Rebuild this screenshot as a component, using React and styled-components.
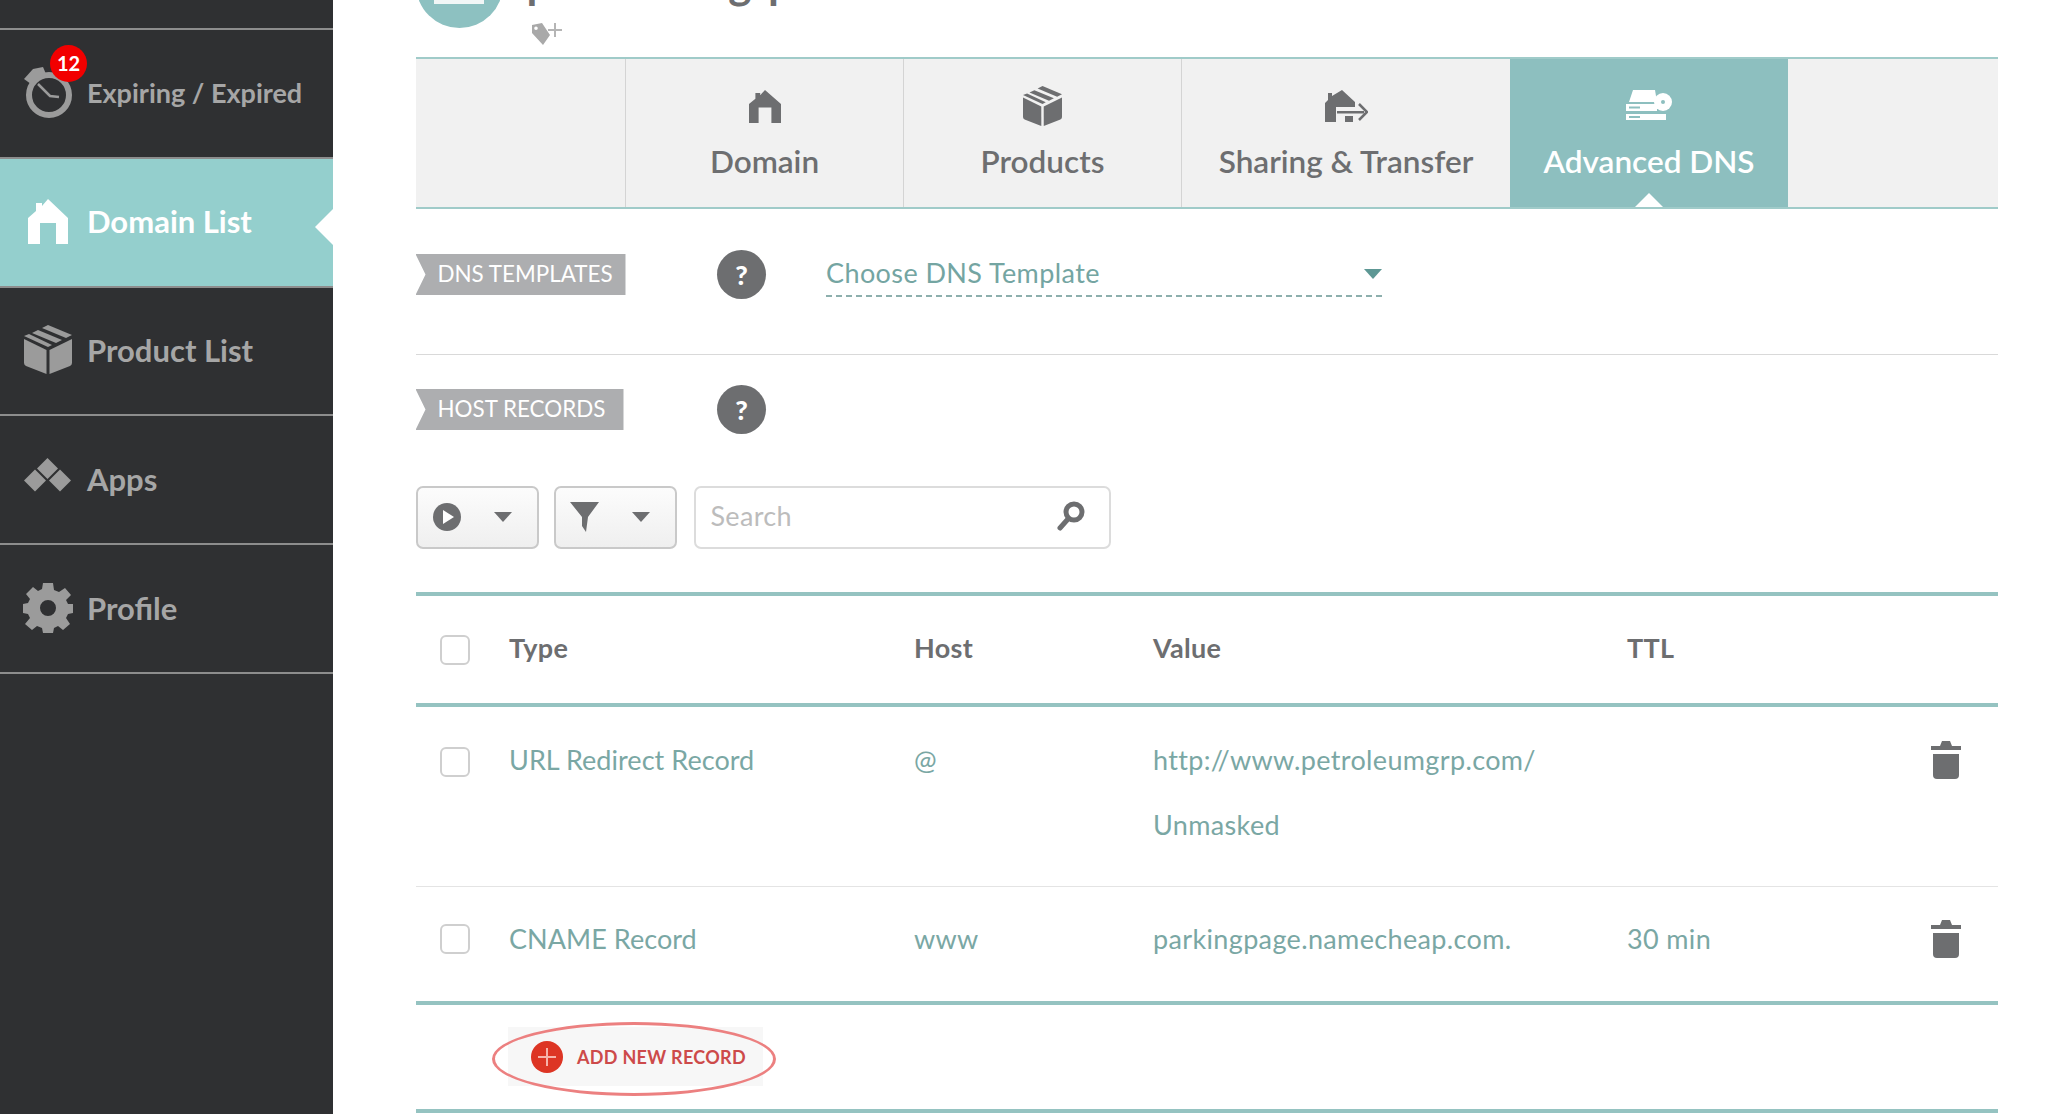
import React from "react";
import styled, { createGlobalStyle } from "styled-components";

const GlobalStyle = createGlobalStyle`
  html, body {
    margin: 0;
    height: 100%;
    overflow: hidden;
    background: #fff;
  }
  * {
    box-sizing: border-box;
  }
  body {
    font-family: Lato, "Open Sans", sans-serif;
  }
`;

const HouseIcon = ({ width = 40, height = 45 }) => (
  <svg width={width} height={height} viewBox="0 0 40 45" fill="currentColor" preserveAspectRatio="none">
    <path d="M0 19 L8 12 V4 H14 V7 L20 0 L40 19 V45 H28 V24 H12 V45 H0 Z" />
  </svg>
);

const BoxIcon = ({ width = 48, height = 49 }) => (
  <svg width={width} height={height} viewBox="0 0 48 49" fill="currentColor">
    <path d="M0 14 L22.5 25 V49 L2 41 Q0 40 0 38 Z" />
    <path d="M48 14 L25.5 25 V49 L46 41 Q48 40 48 38 Z" />
    <path d="M24 0 L48 10 L42 13 L18 3 Z" />
    <path d="M14 5 L38 15 L32 18 L8 8 Z" />
    <path d="M5 9 L28 20 L24 22 L0 11 Z" />
  </svg>
);

const StopwatchIcon = () => (
  <svg width="48" height="51" viewBox="0 0 48 51" fill="none">
    <circle cx="25" cy="28" r="20" stroke="#9b9b9b" strokeWidth="6" />
    <path d="M0 12 L9 2 L19 0 L22 7 L7 17 Z" fill="#9b9b9b" />
    <path d="M14 17 L26 29 L35 30" stroke="#9b9b9b" strokeWidth="2.5" />
  </svg>
);

const AppsIcon = () => (
  <svg width="48" height="35" viewBox="0 0 48 35" fill="#9b9b9b">
    <path d="M23.5 1 L34 11.5 L23.5 22 L13 11.5 Z" />
    <path d="M11 12.5 L22 23.5 L11 34.5 L0 23.5 Z" />
    <path d="M36 12.5 L47 23.5 L36 34.5 L25 23.5 Z" />
  </svg>
);

const GearIcon = () => (
  <svg width="50" height="50" viewBox="0 0 50 50" fill="#9b9b9b">
    <path
      fillRule="evenodd"
      d="M20 0 H30 L31 7 L36 9 L42 5 L48 12 L43 17 L45 21 L50 21 V30 L45 31 L43 35 L47 41 L40 47 L35 43 L31 45 L30 50 H20 L19 45 L14 43 L9 47 L2 41 L7 35 L5 31 L0 30 V21 L5 20 L7 16 L3 11 L10 4 L15 8 L19 6 Z M25 17 A8 8 0 1 0 25 33 A8 8 0 1 0 25 17 Z"
    />
  </svg>
);

const TagPlusIcon = () => (
  <svg width="30" height="22" viewBox="0 0 30 22">
    <path
      fillRule="evenodd"
      fill="#a9a9a9"
      d="M0 2 L10 0 L18 12 L11 22 L0 10 Z M4 3.5 A1.8 1.8 0 1 0 4 7.1 A1.8 1.8 0 1 0 4 3.5 Z"
    />
    <path d="M23 0 V14 M16 7 H30" stroke="#b5b5b5" strokeWidth="2" />
  </svg>
);

const TransferIcon = () => (
  <svg width="44" height="32" viewBox="0 0 44 32" fill="#6d6e70">
    <path d="M1 13 L4 10 V3 H8 V6 L18 0 L31 12 V17 H12 V32 H1 Z" />
    <path d="M13 21 H40 V23.5 H13 Z" />
    <path d="M21 26 H29 V32 H21 Z" />
    <path d="M35 14 L43 22 L35 30" fill="none" stroke="#6d6e70" strokeWidth="2.5" />
  </svg>
);

const DnsIcon = () => (
  <svg width="46" height="30" viewBox="0 0 46 30" fill="#fff">
    <path d="M7 0 H29 L31 12 H3 Z" />
    <path d="M0 14 H31 V21 H0 Z M0 24 H40 V30 H0 Z" />
    <circle cx="37" cy="12" r="9" />
    <circle cx="37" cy="12" r="2" fill="#8dbfbf" />
    <path d="M3 16.5 H14 V18.5 H3 Z M3 26 H14 V28 H3 Z" fill="#8dbfbf" />
  </svg>
);

const PlayIcon = () => (
  <svg width="30" height="30" viewBox="0 0 30 30">
    <circle cx="15" cy="15" r="14" fill="#6d6e70" />
    <path d="M11 8 L22 15 L11 22 Z" fill="#fff" />
  </svg>
);

const FunnelIcon = () => (
  <svg width="30" height="30" viewBox="0 0 30 30" fill="#6d6e70">
    <path d="M0 0 H29 L18 15 L16 30 L12 24 V15 Z" />
  </svg>
);

const SearchIcon = () => (
  <svg width="28" height="30" viewBox="0 0 28 30" fill="none" stroke="#6d6e70">
    <circle cx="17" cy="11" r="8" strokeWidth="5" />
    <path d="M11 18 L3 27" strokeWidth="5" strokeLinecap="round" />
  </svg>
);

const TrashIcon = () => (
  <svg width="30" height="38" viewBox="0 0 30 38" fill="#6d6e70">
    <path d="M0 5 H9 L11 0 H19 L21 5 H30 V9 H0 Z" />
    <path d="M2 13 H28 V34 Q28 38 24 38 H6 Q2 38 2 34 Z" />
  </svg>
);

const PlusIcon = () => (
  <svg width="32" height="32" viewBox="0 0 32 32">
    <circle cx="16" cy="16" r="16" fill="#dd3524" />
    <path d="M15 7 H17 V15 H25 V17 H17 V25 H15 V17 H7 V15 H15 Z" fill="#f6b3aa" />
  </svg>
);

const navItems = [
  { label: "Expiring / Expired", icon: <StopwatchIcon />, badge: 12, size: 27 },
  { label: "Domain List", icon: <HouseIcon />, active: true, inset: 4 },
  { label: "Product List", icon: <BoxIcon /> },
  { label: "Apps", icon: <AppsIcon />, lift: 8 },
  { label: "Profile", icon: <GearIcon />, inset: -1 },
];

const tabs = [
  { label: "Domain", width: 278, iconTop: 31, icon: <HouseIcon width={32} height={33} /> },
  { label: "Products", width: 278, iconTop: 27, icon: <BoxIcon width={39} height={40} /> },
  { label: "Sharing & Transfer", width: 329, iconTop: 31, icon: <TransferIcon /> },
  { label: "Advanced DNS", width: 278, iconTop: 31, icon: <DnsIcon />, active: true },
];

const records = [
  {
    type: "URL Redirect Record",
    host: "@",
    value: ["http://www.petroleumgrp.com/", "Unmasked"],
    ttl: "",
    tall: true,
  },
  {
    type: "CNAME Record",
    host: "www",
    value: ["parkingpage.namecheap.com."],
    ttl: "30 min",
  },
];

const App = () => {
  return (
    <Page>
      <GlobalStyle />
      <Sidebar>
        <SidebarTop />
        {navItems.map((item) => (
          <NavItem key={item.label} $active={item.active} $size={item.size}>
            <NavIcon $active={item.active} $inset={item.inset} $lift={item.lift}>
              {item.icon}
              {item.badge && <Badge>{item.badge}</Badge>}
            </NavIcon>
            {item.label}
          </NavItem>
        ))}
      </Sidebar>
      <Main>
        <DomainHeader>
          <Avatar>
            <AvatarMark />
          </Avatar>
          <div>
            <DomainName>petroleumgrp.com</DomainName>
            <TagSlot>
              <TagPlusIcon />
            </TagSlot>
          </div>
        </DomainHeader>
        <Tabs>
          <TabSpacer />
          {tabs.map((tab) => (
            <Tab key={tab.label} $width={tab.width} $active={tab.active} $iconTop={tab.iconTop}>
              {tab.icon}
              <span>{tab.label}</span>
            </Tab>
          ))}
        </Tabs>
        <TemplateRow>
          <Ribbon $width={210}>DNS TEMPLATES</Ribbon>
          <HelpDot $gap={91.5}>?</HelpDot>
          <TemplateSelect>
            Choose DNS Template
            <SelectCaret />
          </TemplateSelect>
        </TemplateRow>
        <HostRow>
          <Ribbon $width={208}>HOST RECORDS</Ribbon>
          <HelpDot $gap={93.5}>?</HelpDot>
        </HostRow>
        <Toolbar>
          <ToolButton>
            <PlayIcon />
            <Caret />
          </ToolButton>
          <ToolButton>
            <FunnelIcon />
            <Caret />
          </ToolButton>
          <SearchBox>
            <SearchInput placeholder="Search" />
            <SearchIcon />
          </SearchBox>
        </Toolbar>
        <HeaderRow>
          <CheckCell>
            <Checkbox />
          </CheckCell>
          <span>Type</span>
          <span>Host</span>
          <span>Value</span>
          <span>TTL</span>
        </HeaderRow>
        {records.map((record, i) => (
          <RecordRow key={record.type} $tall={record.tall} $last={i === records.length - 1}>
            <CheckCell $top={record.tall ? 6 : 0}>
              <Checkbox />
            </CheckCell>
            <TypeCell>{record.type}</TypeCell>
            <span>{record.host}</span>
            <div>
              {record.value.map((line) => (
                <ValueLine key={line}>{line}</ValueLine>
              ))}
            </div>
            <span>{record.ttl}</span>
            <TrashCell $top={record.tall ? 34 : 33}>
              <TrashIcon />
            </TrashCell>
          </RecordRow>
        ))}
        <AddRow>
          <AddButton>
            <PlusIcon />
            ADD NEW RECORD
            <AddOutline />
          </AddButton>
        </AddRow>
      </Main>
    </Page>
  );
};

export default App;

const Page = styled.div`
  display: flex;
  height: 1114px;
  overflow: hidden;
`;

const Sidebar = styled.nav`
  width: 333px;
  flex-shrink: 0;
  background: #2f3032;
`;

const SidebarTop = styled.div`
  height: 30px;
  border-bottom: 2px solid #8d8d8d;
`;

const NavItem = styled.div`
  position: relative;
  height: 128.8px;
  display: flex;
  align-items: center;
  padding: 0 0 2px 24px;
  font-size: ${(p) => p.$size || 31}px;
  font-weight: 700;
  color: ${(p) => (p.$active ? "#fff" : "#a6a6a6")};
  background: ${(p) => (p.$active ? "#94cfcd" : "transparent")};
  border-bottom: 2px solid #8d8d8d;

  ${(p) =>
    p.$active &&
    `
    &::after {
      content: "";
      position: absolute;
      right: 0;
      top: 50px;
      border-style: solid;
      border-width: 18px 18px 18px 0;
      border-color: transparent #fff transparent transparent;
    }
  `}
`;

const NavIcon = styled.div`
  position: relative;
  width: 63px;
  padding-left: ${(p) => Math.max(p.$inset || 0, 0)}px;
  margin-left: ${(p) => Math.min(p.$inset || 0, 0)}px;
  margin-right: ${(p) => -Math.min(p.$inset || 0, 0)}px;
  margin-bottom: ${(p) => p.$lift || 0}px;
  display: flex;
  align-items: center;
  color: ${(p) => (p.$active ? "#fff" : "#9b9b9b")};
`;

const Badge = styled.span`
  position: absolute;
  left: 26px;
  top: -22px;
  width: 37px;
  height: 37px;
  border-radius: 50%;
  background: #f20000;
  color: #fff;
  font-size: 20px;
  font-weight: 700;
  display: flex;
  align-items: center;
  justify-content: center;
`;

const Main = styled.main`
  flex: 1;
  padding: 0 50px 0 82.5px;
  min-width: 0;
`;

const DomainHeader = styled.header`
  height: 57px;
  display: flex;
  gap: 24px;
`;

const Avatar = styled.div`
  width: 87px;
  height: 87px;
  margin-top: -59px;
  border-radius: 50%;
  background: #8dc1c1;
  display: flex;
  justify-content: center;
  align-items: flex-end;
  padding-bottom: 24px;
`;

const AvatarMark = styled.div`
  width: 50px;
  height: 8px;
  background: #f1f6f6;
`;

const DomainName = styled.h1`
  margin: -41px 0 18px;
  height: 46px;
  line-height: 46px;
  font-size: 44px;
  font-weight: 700;
  color: #6d6e70;
  white-space: nowrap;
`;

const TagSlot = styled.div`
  display: flex;
  margin-left: 5px;
`;

const Tabs = styled.div`
  height: 152px;
  display: flex;
  background: #f1f1f1;
  border-top: 2px solid #a0cbc9;
  border-bottom: 2px solid #a0cbc9;
`;

const TabSpacer = styled.div`
  width: 209.5px;
`;

const Tab = styled.div`
  position: relative;
  width: ${(p) => p.$width}px;
  display: flex;
  flex-direction: column;
  align-items: center;
  justify-content: flex-start;
  padding-top: ${(p) => p.$iconTop}px;
  font-size: 31.5px;
  font-weight: 600;
  color: ${(p) => (p.$active ? "#fff" : "#6d6e70")};
  background: ${(p) => (p.$active ? "#8dbfbf" : "transparent")};
  border-left: 1px solid #d4d4d4;

  span {
    position: absolute;
    top: 83px;
    white-space: nowrap;
  }

  ${(p) =>
    p.$active &&
    `
    border-left: 0;
    &::after {
      content: "";
      position: absolute;
      bottom: 0;
      left: 50%;
      margin-left: -14px;
      border-style: solid;
      border-width: 0 14px 14px 14px;
      border-color: transparent transparent #fff transparent;
    }
  `}
`;

const TemplateRow = styled.section`
  height: 146px;
  padding-top: 41px;
  display: flex;
  align-items: flex-start;
  border-bottom: 1px solid #d9d9d9;
`;

const HostRow = styled.section`
  height: 131px;
  padding-top: 30px;
  display: flex;
  align-items: flex-start;
`;

const Ribbon = styled.div`
  width: ${(p) => p.$width}px;
  height: 41px;
  margin-top: 4px;
  padding: 0 0 2px 22px;
  display: flex;
  align-items: center;
  background: #adaeb0;
  color: #fff;
  font-size: 22.4px;
  clip-path: polygon(0 0, 100% 0, 100% 100%, 0 100%, 10px 50%);
  white-space: nowrap;
`;

const HelpDot = styled.div`
  width: 49px;
  height: 49px;
  margin-left: ${(p) => p.$gap}px;
  border-radius: 50%;
  background: #6d6e70;
  color: #fff;
  font-size: 27px;
  font-weight: 900;
  display: flex;
  align-items: center;
  justify-content: center;
`;

const TemplateSelect = styled.div`
  width: 556px;
  height: 47px;
  margin-left: 60px;
  display: flex;
  align-items: center;
  justify-content: space-between;
  font-size: 27px;
  letter-spacing: 0.4px;
  color: #74a5a2;
  border-bottom: 2px dashed #8dafad;
`;

const Caret = styled.i`
  width: 0;
  height: 0;
  border-style: solid;
  border-width: 10px 9px 0 9px;
  border-color: #6d6e70 transparent transparent transparent;
`;

const SelectCaret = styled(Caret)`
  margin-top: 2px;
  border-top-color: #5d9794;
`;

const Toolbar = styled.div`
  height: 106px;
  display: flex;
  gap: 15px;
`;

const ToolButton = styled.div`
  width: 123px;
  height: 63px;
  padding: 0 25px 2px 14px;
  display: flex;
  align-items: center;
  justify-content: space-between;
  border: 2px solid #c9c9c9;
  border-radius: 7px;
  background: linear-gradient(#fcfcfc, #efefef);
`;

const SearchBox = styled.div`
  width: 417px;
  height: 63px;
  margin-left: 2px;
  padding: 0 24px 4px 13px;
  display: flex;
  align-items: center;
  border: 2px solid #dcdcdc;
  border-radius: 7px;
`;

const SearchInput = styled.input`
  flex: 1;
  min-width: 0;
  border: 0;
  outline: 0;
  font-family: inherit;
  font-size: 27px;
  letter-spacing: 0.3px;
  color: #6d6e70;

  &::placeholder {
    color: #bcbcbc;
  }
`;

const rowGrid = `
  display: grid;
  grid-template-columns: 93.5px 405px 239px 474px 1fr;
  align-items: center;
`;

const HeaderRow = styled.div`
  ${rowGrid}
  height: 115px;
  font-size: 27px;
  font-weight: 700;
  letter-spacing: 0.3px;
  color: #6d6e70;
  border-top: 4px solid #95c3c1;
  border-bottom: 4px solid #95c3c1;

  span {
    margin-top: -5px;
  }
`;

const RecordRow = styled.div`
  ${rowGrid}
  position: relative;
  height: ${(p) => (p.$tall ? "180px" : "118px")};
  padding: ${(p) => (p.$tall ? "34px 0 0" : "0 0 10px")};
  align-items: ${(p) => (p.$tall ? "start" : "center")};
  font-size: 27px;
  line-height: 38px;
  letter-spacing: 0.35px;
  color: #7aa7a4;
  border-bottom: ${(p) => (p.$last ? "4px solid #95c3c1" : "1px solid #e4e4e4")};
`;

const TypeCell = styled.span`
  letter-spacing: 0.05px;
`;

const CheckCell = styled.div`
  display: flex;
  padding: ${(p) => p.$top || 0}px 0 0 24.5px;
`;

const Checkbox = styled.div`
  width: 30px;
  height: 30px;
  border: 2px solid #cfcfcf;
  border-radius: 6px;
  background: #fff;
`;

const ValueLine = styled.div`
  margin-bottom: 27px;

  &:last-child {
    margin-bottom: 0;
  }
`;

const TrashCell = styled.div`
  position: absolute;
  right: 37px;
  top: ${(p) => p.$top}px;
  display: flex;
`;

const AddRow = styled.div`
  height: 108px;
  padding: 22px 0 0 92.5px;
  border-bottom: 4px solid #95c3c1;
`;

const AddButton = styled.div`
  position: relative;
  width: 255px;
  height: 59px;
  padding-left: 23px;
  display: flex;
  align-items: center;
  gap: 14px;
  background: #f7f7f7;
  color: #cd4a4a;
  font-size: 18px;
  font-weight: 700;
  letter-spacing: 0.3px;
  white-space: nowrap;
`;

const AddOutline = styled.span`
  position: absolute;
  left: -16px;
  top: -5px;
  width: 284px;
  height: 74px;
  border: 3px solid #ec8080;
  border-radius: 50%;
`;
